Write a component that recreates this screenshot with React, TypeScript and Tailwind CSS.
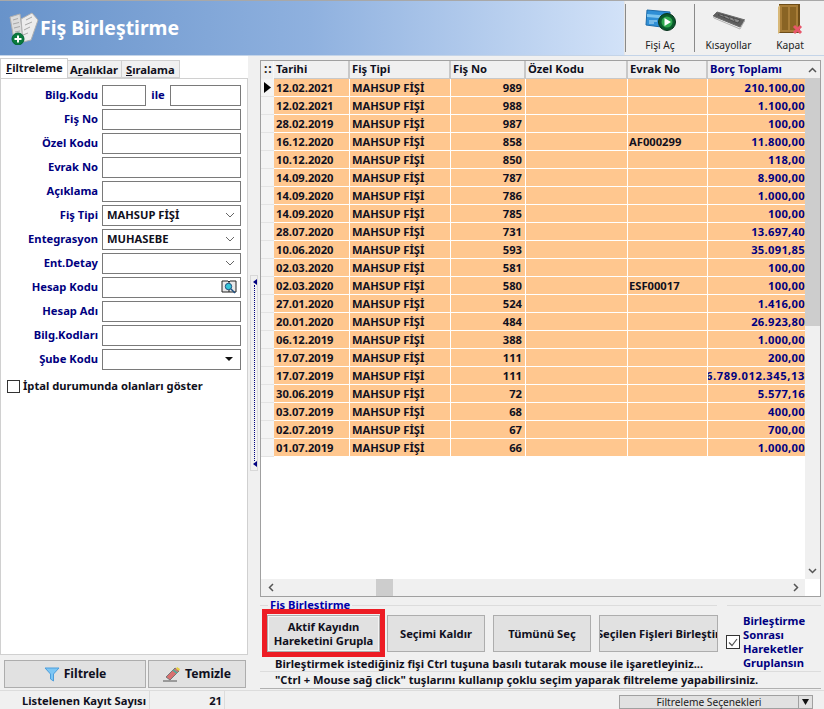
import React from "react";

const rows: [string, string, string, string, string][] = [
  ["12.02.2021", "989", "", "", "210.100,00"],
  ["12.02.2021", "988", "", "", "1.100,00"],
  ["28.02.2019", "987", "", "", "100,00"],
  ["16.12.2020", "858", "", "AF000299", "11.800,00"],
  ["10.12.2020", "850", "", "", "118,00"],
  ["14.09.2020", "787", "", "", "8.900,00"],
  ["14.09.2020", "786", "", "", "1.000,00"],
  ["14.09.2020", "785", "", "", "100,00"],
  ["28.07.2020", "731", "", "", "13.697,40"],
  ["10.06.2020", "593", "", "", "35.091,85"],
  ["02.03.2020", "581", "", "", "100,00"],
  ["02.03.2020", "580", "", "ESF00017", "100,00"],
  ["27.01.2020", "524", "", "", "1.416,00"],
  ["20.01.2020", "484", "", "", "26.923,80"],
  ["06.12.2019", "388", "", "", "1.000,00"],
  ["17.07.2019", "111", "", "", "200,00"],
  ["17.07.2019", "111", "", "", "6.789.012.345,13"],
  ["30.06.2019", "72", "", "", "5.577,16"],
  ["03.07.2019", "68", "", "", "400,00"],
  ["02.07.2019", "67", "", "", "700,00"],
  ["01.07.2019", "66", "", "", "1.000,00"],
];

const Chevron = () => (
  <svg width="10" height="6" viewBox="0 0 10 6" className="shrink-0">
    <path d="M1 1l4 4 4-4" fill="none" stroke="#666" strokeWidth="1" />
  </svg>
);

function Label({ children }: { children: React.ReactNode }) {
  return <div className="w-[98px] shrink-0 pr-[1px] text-right text-[#000080] whitespace-nowrap">{children}</div>;
}

function Field({ label, children }: { label: string; children?: React.ReactNode }) {
  return (
    <div className="flex h-[24px] items-center gap-[3px]">
      <Label>{label}</Label>
      <div className="flex h-[21px] w-[139px] items-center justify-between border border-[#7a7a7a] bg-white pl-[4px] pr-[5px] text-[#101020]">
        {children}
      </div>
    </div>
  );
}

function FlatButton({ className, children }: { className: string; children: React.ReactNode }) {
  return (
    <div className={"flex shrink-0 items-center justify-center overflow-hidden border border-[#adadad] bg-[#e1e1e1] text-center leading-[14px] text-[#101020] " + className}>
      {children}
    </div>
  );
}

function Tool({ label, children, w }: { label: string; children: React.ReactNode; w: string }) {
  return (
    <div className={"flex h-[52px] flex-col items-center justify-between pb-[3px] pt-[1px] " + w}>
      <div className="flex h-[34px] items-center">{children}</div>
      <div className="text-[10.2px] font-normal leading-[12px] text-[#222]">{label}</div>
    </div>
  );
}

export default function App() {
  return (
    <div
      className="flex h-[709px] w-[824px] flex-col overflow-hidden bg-[#f0f0f0] text-[11.2px] font-bold leading-[14px]"
      style={{ fontFamily: '"Noto Sans", "DejaVu Sans", sans-serif' }}
    >
      {/* Header */}
      <div className="flex h-[56px] shrink-0 border-y border-t-[#a8a8a8] border-b-[#c4d4e8]">
        <div className="flex w-[624px] items-center bg-gradient-to-r from-[#6893ca] via-[#8fb1df] to-[#d2e2f8] pl-[9px]">
          <svg width="30" height="34" viewBox="0 0 30 34" className="mr-[1px]">
            <path d="M1 6l10-3 3 23-9 3z" fill="#dcdcdc" stroke="#b0b0b0" />
            <path d="M12 8l11-6 6 7-7 20-8 2z" fill="#ececec" stroke="#b0b0b0" />
            <path d="M4 9l5-1.500M4 13l6-1.500M5 17l6-1.500M6 21l5-1M17 9l6-3M16 14l7-3M15 19l6-3M14 24l5-2" stroke="#a8a8a8" />
            <circle cx="9" cy="28" r="6" fill="#0a7a3c" stroke="#063" />
            <path d="M9 24.500v7M5.500 28h7" stroke="#fff" strokeWidth="2" />
          </svg>
          <span className="text-[19.4px] leading-[24px] text-white">Fiş Birleştirme</span>
        </div>
        <div className="flex flex-1 items-center border-l border-[#e6e6e6] bg-[#f0f0f0]">
          <div className="h-[48px] w-[1px] bg-[#8a8a8a]" />
          <Tool label="Fişi Aç" w="w-[68px]">
            <svg width="32" height="26" viewBox="0 0 32 26">
              <path d="M3 3l23 2-1 16L2 18z" fill="#2f8fd6" stroke="#1c6aa8" />
              <path d="M3 7l23 2v3L3 10z" fill="#7cc4ee" />
              <path d="M5 14h8M5 16h5" stroke="#bfe4f8" />
              <circle cx="23" cy="15" r="8.500" fill="#0a5a2c" stroke="#06301a" />
              <circle cx="23" cy="15" r="5.500" fill="#2fa84f" />
              <path d="M20.500 11l6.500 4-6.500 4z" fill="#fff" />
            </svg>
          </Tool>
          <div className="h-[48px] w-[1px] bg-[#8a8a8a]" />
          <Tool label="Kısayollar" w="w-[67px]">
            <svg width="32" height="20" viewBox="0 0 32 20">
              <path d="M0 6l4-4 28 8-5 7z" fill="#5f5f5f" stroke="#6a6a6a" />
              <path d="M5 5l2-1 20 6-2 3zM10 5l2 3M15 6l2 3M20 8l2 3" fill="#8c8c8c" stroke="#3c3c3c" strokeWidth=".7" />
              <path d="M0 6l1 2 26 11 5-9" fill="none" stroke="#b4b4b4" />
            </svg>
          </Tool>
          <Tool label="Kapat" w="w-[56px]">
            <svg width="26" height="34" viewBox="0 0 26 34">
              <path d="M2 1h21v29H2z" fill="#6e4d18" />
              <path d="M3 2h18v27H3z" fill="#a87d38" />
              <path d="M5 4h6v23H5zM13 4h6v23h-6z" fill="#8a6424" />
              <path d="M3 2L1 4v27l2-2z" fill="#d8b878" />
              <path d="M17 23l7 7M24 23l-7 7" stroke="#e8566a" strokeWidth="3" />
            </svg>
          </Tool>
        </div>
      </div>

      {/* Body */}
      <div className="flex h-[634px] shrink-0">
        {/* Left */}
        <div className="flex w-[248px] shrink-0 flex-col">
          <div className="flex h-[22px] shrink-0 items-end bg-white pt-[2px]">
            <div className="h-[20px] w-[68px] border border-b-0 border-[#d0d0d0] bg-white pl-[5px] pt-[2px] text-[#101020]">
              <span className="underline">F</span>iltreleme
            </div>
            <div className="h-[18px] w-[54px] border border-l-0 border-[#d0d0d0] bg-[#f0f0f0] pl-[2px] pt-[2px] text-[#101020]">
              A<span className="underline">r</span>alıklar
            </div>
            <div className="h-[18px] w-[58px] border border-l-0 border-[#d0d0d0] bg-[#f0f0f0] pl-[4px] pt-[2px] text-[#101020]">
              <span className="underline">S</span>ıralama
            </div>
          </div>
          <div className="flex h-[577px] shrink-0 flex-col border border-[#d0d0d0] bg-white pt-[4px]">
            <div className="flex h-[24px] items-center gap-[3px]">
              <Label>Bilg.Kodu</Label>
              <div className="h-[21px] w-[44px] border border-[#7a7a7a] bg-white" />
              <div className="w-[18px] text-center text-[#000080]">ile</div>
              <div className="h-[21px] w-[71px] border border-[#7a7a7a] bg-white" />
            </div>
            <Field label="Fiş No" />
            <Field label="Özel Kodu" />
            <Field label="Evrak No" />
            <Field label="Açıklama" />
            <Field label="Fiş Tipi"><span>MAHSUP FİŞİ</span><Chevron /></Field>
            <Field label="Entegrasyon"><span>MUHASEBE</span><Chevron /></Field>
            <Field label="Ent.Detay"><span /><Chevron /></Field>
            <Field label="Hesap Kodu">
              <span />
              <svg width="16" height="14" viewBox="0 0 16 14" className="-mr-[2px]">
                <path d="M1 1h6l1 1 1-1h6v11H1z" fill="#e8e8e8" stroke="#222" />
                <path d="M8 2v10" stroke="#222" />
                <circle cx="7.500" cy="6.500" r="3.200" fill="#35c6d8" stroke="#1d4f80" />
                <path d="M10 9l4 4" stroke="#1d4f80" strokeWidth="1.500" />
              </svg>
            </Field>
            <Field label="Hesap Adı" />
            <Field label="Bilg.Kodları" />
            <Field label="Şube Kodu">
              <span />
              <svg width="8" height="4" viewBox="0 0 8 4" className="mr-[2px]"><path d="M0 0h8L4 4z" fill="#111" /></svg>
            </Field>
            <div className="mt-[8px] flex items-center gap-[3px] pl-[6px] text-[#101020]">
              <div className="h-[13px] w-[13px] border border-[#333] bg-white" />
              <span>İptal durumunda olanları göster</span>
            </div>
          </div>
          <div className="flex flex-1 items-start gap-[2px] pl-[4px] pt-[5px]">
            <FlatButton className="h-[28px] w-[142px] gap-[4px] text-[12.2px]">
              <svg width="16" height="16" viewBox="0 0 16 16"><path d="M1 2h14L9.500 8v7l-3-2V8z" fill="#7cc6f4" stroke="#4c9edc" /></svg>
              Filtrele
            </FlatButton>
            <FlatButton className="h-[28px] w-[98px] gap-[4px] text-[12.2px]">
              <svg width="18" height="16" viewBox="0 0 18 16">
                <path d="M3 11l9-9 4 3-9 9z" fill="#d87070" stroke="#777" />
                <path d="M10 4l4 3" stroke="#5a9" strokeWidth="2" />
                <path d="M14 1l3 2-1 2-3-2z" fill="#e8d040" />
                <path d="M0 15h14" stroke="#555" />
              </svg>
              Temizle
            </FlatButton>
          </div>
        </div>

        {/* Splitter */}
        <div className="flex w-[12px] shrink-0 flex-col items-center pt-[219px]">
          <div className="flex h-[196px] w-[8px] flex-col items-center justify-between border border-[#d8d8d8] py-[3px] pl-[1px]">
            <svg width="4" height="6" viewBox="0 0 4 6"><path d="M4 0v6L0 3z" fill="#000080" /></svg>
            <div className="w-0 flex-1 border-l border-dotted border-[#000080]" />
            <svg width="4" height="6" viewBox="0 0 4 6"><path d="M4 0v6L0 3z" fill="#000080" /></svg>
          </div>
        </div>

        {/* Right */}
        <div className="flex w-[561px] shrink-0 flex-col">
          {/* Grid */}
          <div className="mt-[4px] flex h-[537px] shrink-0 flex-col border border-[#a0a0a0] bg-white">
            <div className="flex min-h-0 flex-1">
              <div className="flex w-[544px] flex-col overflow-hidden">
                <div className="flex h-[18px] shrink-0 bg-[#f0f0f0] text-[#101020]">
                  <div className="w-[13px] shrink-0 border-r border-[#f8f8f8] pl-[3px] text-[12px] leading-[15px] tracking-[1px] text-[#222]">::</div>
                  {[["Tarihi", "w-[76px]"], ["Fiş Tipi", "w-[101px]"], ["Fiş No", "w-[75px]"], ["Özel Kodu", "w-[102px]"], ["Evrak No", "w-[80px]"]].map(([t, w]) => (
                    <div key={t} className={"shrink-0 border-r-2 border-b border-[#c8c8c8] pl-[2px] pt-[1px] " + w}>{t}</div>
                  ))}
                  <div className="w-[97px] shrink-0 border-b border-[#c8c8c8] pl-[2px] pt-[1px] text-[#000080]">Borç Toplamı</div>
                </div>
                {rows.map((r, i) => (
                  <div key={i} className="flex h-[18px] shrink-0">
                    <div className="flex w-[13px] shrink-0 items-center border-b border-[#e4e4e4] bg-[#f4f4f4] pl-[3px]">
                      {i === 0 && <svg width="7" height="11" viewBox="0 0 7 11"><path d="M0 0l7 5.500L0 11z" fill="#000" /></svg>}
                    </div>
                    <div className="flex flex-1 border-b border-white bg-[#ffc78f] text-[#101020]">
                      <div className="w-[76px] shrink-0 border-r border-white pl-[2px] pt-[2px]">{r[0]}</div>
                      <div className="w-[101px] shrink-0 border-r border-white pl-[2px] pt-[2px]">MAHSUP FİŞİ</div>
                      <div className="w-[75px] shrink-0 border-r border-white pr-[3px] pt-[2px] text-right">{r[1]}</div>
                      <div className="w-[102px] shrink-0 border-r border-white pl-[2px] pt-[2px]">{r[2]}</div>
                      <div className="w-[80px] shrink-0 border-r border-white pl-[1px] pt-[2px]">{r[3]}</div>
                      <div className={"flex w-[97px] shrink-0 justify-end overflow-hidden pt-[2px] text-[#000080] whitespace-nowrap " + (i === 16 ? "tracking-[0.6px]" : "tracking-[0.3px]")}>{r[4]}</div>
                    </div>
                  </div>
                ))}
              </div>
              <div className="flex w-[15px] flex-col items-center bg-[#f0f0f0]">
                <div className="flex h-[17px] items-center"><svg width="9" height="6" viewBox="0 0 9 6"><path d="M1 5l3.500-3.500L8 5" fill="none" stroke="#555" strokeWidth="1.500" /></svg></div>
                <div className="h-[248px] w-full bg-[#cdcdcd]" />
                <div className="flex-1" />
                <div className="flex h-[17px] items-center"><svg width="9" height="6" viewBox="0 0 9 6"><path d="M1 1l3.500 3.500L8 1" fill="none" stroke="#555" strokeWidth="1.500" /></svg></div>
              </div>
            </div>
            <div className="flex h-[17px] shrink-0 items-center pr-[15px]">
              <div className="flex h-full flex-1 items-center bg-[#f0f0f0] pl-[7px] pr-[6px]">
                <svg width="6" height="9" viewBox="0 0 6 9"><path d="M5 1L1.500 4.500 5 8" fill="none" stroke="#555" strokeWidth="1.500" /></svg>
                <div className="ml-[102px] h-[17px] w-[17px] bg-[#cdcdcd]" />
                <div className="flex-1" />
                <svg width="6" height="9" viewBox="0 0 6 9"><path d="M1 1l3.500 3.500L1 8" fill="none" stroke="#555" strokeWidth="1.500" /></svg>
              </div>
            </div>
          </div>

          {/* Group */}
          <div className="flex flex-1 flex-col">
            <div className="flex h-[75px] shrink-0 border-b border-[#dcdcdc]">
              <div className="flex w-[465px] shrink-0 flex-col">
                <div className="flex h-[12px] shrink-0">
                  <div className="mt-[8px] h-[1px] w-[8px] bg-[#dcdcdc]" />
                  <div className="overflow-hidden px-[2px] pt-[1px] text-[#0000aa] whitespace-nowrap">Fiş Birleştirme</div>
                  <div className="mt-[8px] h-[1px] w-[365px] bg-[#dcdcdc]" />
                </div>
                <div className="ml-[2px] flex h-[48px] shrink-0 items-start">
                  <div className="h-[48px] w-[123px] shrink-0 border-[5px] border-[#ed1c24] pt-[1px]">
                    <FlatButton className="h-[37px] w-[113px] shadow-[inset_0_0_0_1px_#f4f4f4]">
                      Aktif Kayıdın<br />Hareketini Grupla
                    </FlatButton>
                  </div>
                  <FlatButton className="ml-[2px] mt-[6px] h-[37px] w-[98px] whitespace-nowrap">Seçimi Kaldır</FlatButton>
                  <FlatButton className="ml-[8px] mt-[6px] h-[37px] w-[98px] whitespace-nowrap">Tümünü Seç</FlatButton>
                  <FlatButton className="ml-[8px] mt-[6px] h-[37px] w-[119px] whitespace-nowrap">Seçilen Fişleri Birleştir</FlatButton>
                </div>
                <div className="flex-1 pl-[15px] text-[#101020] whitespace-nowrap">
                  Birleştirmek istediğiniz fişi Ctrl tuşuna basılı tutarak mouse ile işaretleyiniz...
                </div>
              </div>
              <div className="flex flex-1 flex-col">
                <div className="ml-[2px] mt-[8px] h-[1px] bg-[#dcdcdc]" />
                <div className="flex flex-1 items-center pl-[1px] pt-[7px]">
                  <div className="flex h-[14px] w-[14px] shrink-0 items-center justify-center border border-[#333] bg-white">
                    <svg width="10" height="9" viewBox="0 0 10 9"><path d="M1 4.500l3 3 5-6.500" fill="none" stroke="#555" strokeWidth="1.200" /></svg>
                  </div>
                  <div className="ml-[3px] text-[#000080]">Birleştirme<br />Sonrası<br />Hareketler<br />Gruplansın</div>
                </div>
              </div>
            </div>
            <div className="h-[17px] shrink-0 border-b border-[#b0b0b0] pl-[15px] pt-[1px] text-[#101020] whitespace-nowrap">
              "Ctrl + Mouse sağ click" tuşlarını kullanıp çoklu seçim yaparak filtreleme yapabilirsiniz.
            </div>
          </div>
        </div>
      </div>

      {/* Status */}
      <div className="flex h-[19px] shrink-0 items-end border-t border-[#dcdcdc] text-[#101020]">
        <div className="h-[18px] w-[150px] shrink-0 border-r border-[#dcdcdc] pl-[22px] pt-[3px] whitespace-nowrap">Listelenen Kayıt Sayısı</div>
        <div className="h-[18px] w-[75px] shrink-0 border-r border-[#dcdcdc] pr-[2px] pt-[3px] text-right">21</div>
        <div className="ml-[394px] flex h-[14px] w-[194px] shrink-0 border border-[#a0a0a0] bg-[#e1e1e1] text-[10.2px] font-normal leading-[13px] text-[#222]">
          <div className="flex-1 border-r border-[#a0a0a0] text-center">Filtreleme Seçenekleri</div>
          <div className="flex w-[13px] items-center justify-center">
            <svg width="7" height="6" viewBox="0 0 7 6"><path d="M0 0h7L3.500 6z" fill="#111" /></svg>
          </div>
        </div>
      </div>
    </div>
  );
}
